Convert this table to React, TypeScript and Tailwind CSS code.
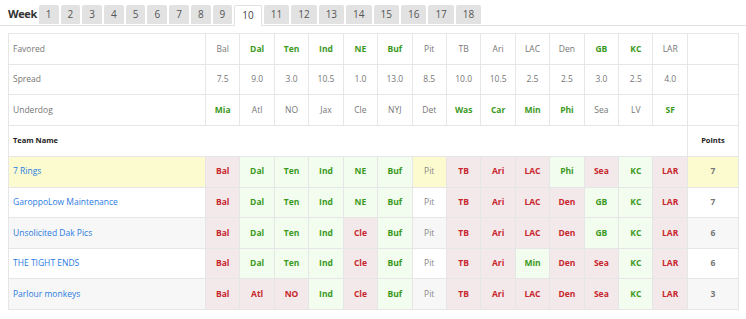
import React from "react";

type P = { t: string; s: "W" | "L" | "N" };

const teamsCols = ["Bal","Dal","Ten","Ind","NE","Buf","Pit","TB","Ari","LAC","Den","GB","KC","LAR"];
const favored: [string, boolean][] = [["Bal",false],["Dal",true],["Ten",true],["Ind",true],["NE",true],["Buf",true],["Pit",false],["TB",false],["Ari",false],["LAC",false],["Den",false],["GB",true],["KC",true],["LAR",false]];
const spread = ["7.5","9.0","3.0","10.5","1.0","13.0","8.5","10.0","10.5","2.5","2.5","3.0","2.5","4.0"];
const underdog: [string, boolean][] = [["Mia",true],["Atl",false],["NO",false],["Jax",false],["Cle",false],["NYJ",false],["Det",false],["Was",true],["Car",true],["Min",true],["Phi",true],["Sea",false],["LV",false],["SF",true]];

const mk = (s: string): P[] =>
  s.split(" ").map((x) => {
    const [t, r] = x.split(":");
    return { t, s: r as "W" | "L" | "N" };
  });

const rows: { name: string; picks: P[]; pts: string; bg: string }[] = [
  { name: "7 Rings", picks: mk("Bal:L Dal:W Ten:W Ind:W NE:W Buf:W Pit:N TB:L Ari:L LAC:L Phi:W Sea:L KC:W LAR:L"), pts: "7", bg: "bg-[#fcfbd0]" },
  { name: "GaroppoLow Maintenance", picks: mk("Bal:L Dal:W Ten:W Ind:W NE:W Buf:W Pit:N TB:L Ari:L LAC:L Den:L GB:W KC:W LAR:L"), pts: "7", bg: "bg-white" },
  { name: "Unsolicited Dak Pics", picks: mk("Bal:L Dal:W Ten:W Ind:W Cle:L Buf:W Pit:N TB:L Ari:L LAC:L Den:L GB:W KC:W LAR:L"), pts: "6", bg: "bg-[#f7f7f7]" },
  { name: "THE TIGHT ENDS", picks: mk("Bal:L Dal:W Ten:W Ind:W Cle:L Buf:W Pit:N TB:L Ari:L Min:W Den:L Sea:L KC:W LAR:L"), pts: "6", bg: "bg-white" },
  { name: "Parlour monkeys", picks: mk("Bal:L Atl:L NO:L Ind:W Cle:L Buf:W Pit:N TB:L Ari:L LAC:L Den:L Sea:L KC:W LAR:L"), pts: "3", bg: "bg-[#f7f7f7]" },
];

const weeks = Array.from({ length: 18 }, (_, i) => i + 1);

const cell = "border border-[#e6e6e6] text-center";

export default function App() {
  return (
    <div className="w-[746px] h-[319px] bg-white font-['Open_Sans',sans-serif] text-[8.5px] text-[#777]">
      <div className="flex items-end h-[26px] border-b border-[#e2e2e2] pl-[8px]">
        <div className="text-[11px] font-bold text-[#333] h-[21px] flex items-center mr-[2px] tracking-[-0.4px]">Week</div>
        <div className="flex gap-[2px] mb-[-1px]">
          {weeks.map((w) =>
            w === 10 ? (
              <div key={w} className="h-[21px] px-[7px] flex items-center bg-white border border-[#e2e2e2] border-b-white rounded-t-[2px] text-[#444] text-[10px]">{w}</div>
            ) : (
              <div key={w} className="h-[19px] mb-[2px] px-[7px] flex items-center bg-[#e2e2e2] rounded-t-[2px] text-[#555] text-[10px]">{w}</div>
            )
          )}
        </div>
      </div>
      <div className="pl-[8px] pt-[7px]">
        <table className="border-collapse table-fixed w-[730px] border border-[#e6e6e6]">
          <colgroup>
            <col className="w-[197px]" />
            {teamsCols.map((c) => (<col key={c} className="w-[34.43px]" />))}
            <col className="w-[51px]" />
          </colgroup>
          <tbody>
            <tr className="h-[31px]">
              <td className="border border-[#e6e6e6] pl-[4px]">Favored</td>
              {favored.map(([t, g], i) => (
                <td key={i} className={`${cell} ${g ? "text-[#3b9a1d] font-bold" : ""}`}>{t}</td>
              ))}
              <td className={cell}></td>
            </tr>
            <tr className="h-[30px]">
              <td className="border border-[#e6e6e6] pl-[4px]">Spread</td>
              {spread.map((t, i) => (<td key={i} className={cell}>{t}</td>))}
              <td className={cell}></td>
            </tr>
            <tr className="h-[31px]">
              <td className="border border-[#e6e6e6] pl-[4px]">Underdog</td>
              {underdog.map(([t, g], i) => (
                <td key={i} className={`${cell} ${g ? "text-[#3b9a1d] font-bold" : ""}`}>{t}</td>
              ))}
              <td className={cell}></td>
            </tr>
            <tr className="h-[31px]">
              <td colSpan={15} className="border border-[#e6e6e6] pl-[4px] font-bold text-[7.5px] text-[#222]">Team Name</td>
              <td className="border border-[#e6e6e6] text-center font-bold text-[7.5px] text-[#222]">Points</td>
            </tr>
            {rows.map((r, ri) => (
              <tr key={ri} className="h-[30.6px]">
                <td className={`border border-[#e6e6e6] pl-[4px] text-[#2a7be0] ${r.bg}`}>{r.name}</td>
                {r.picks.map((p, i) => (
                  <td
                    key={i}
                    className={`${cell} ${
                      p.s === "W"
                        ? "bg-[#f2fcef] text-[#3b9a1d] font-bold"
                        : p.s === "L"
                        ? "bg-[#f3e9ea] text-[#c8262d] font-bold"
                        : `${r.bg} text-[#888]`
                    }`}
                  >
                    {p.t}
                  </td>
                ))}
                <td className={`${cell} ${r.bg} font-bold text-[#777]`}>{r.pts}</td>
              </tr>
            ))}
          </tbody>
        </table>
      </div>
    </div>
  );
}
